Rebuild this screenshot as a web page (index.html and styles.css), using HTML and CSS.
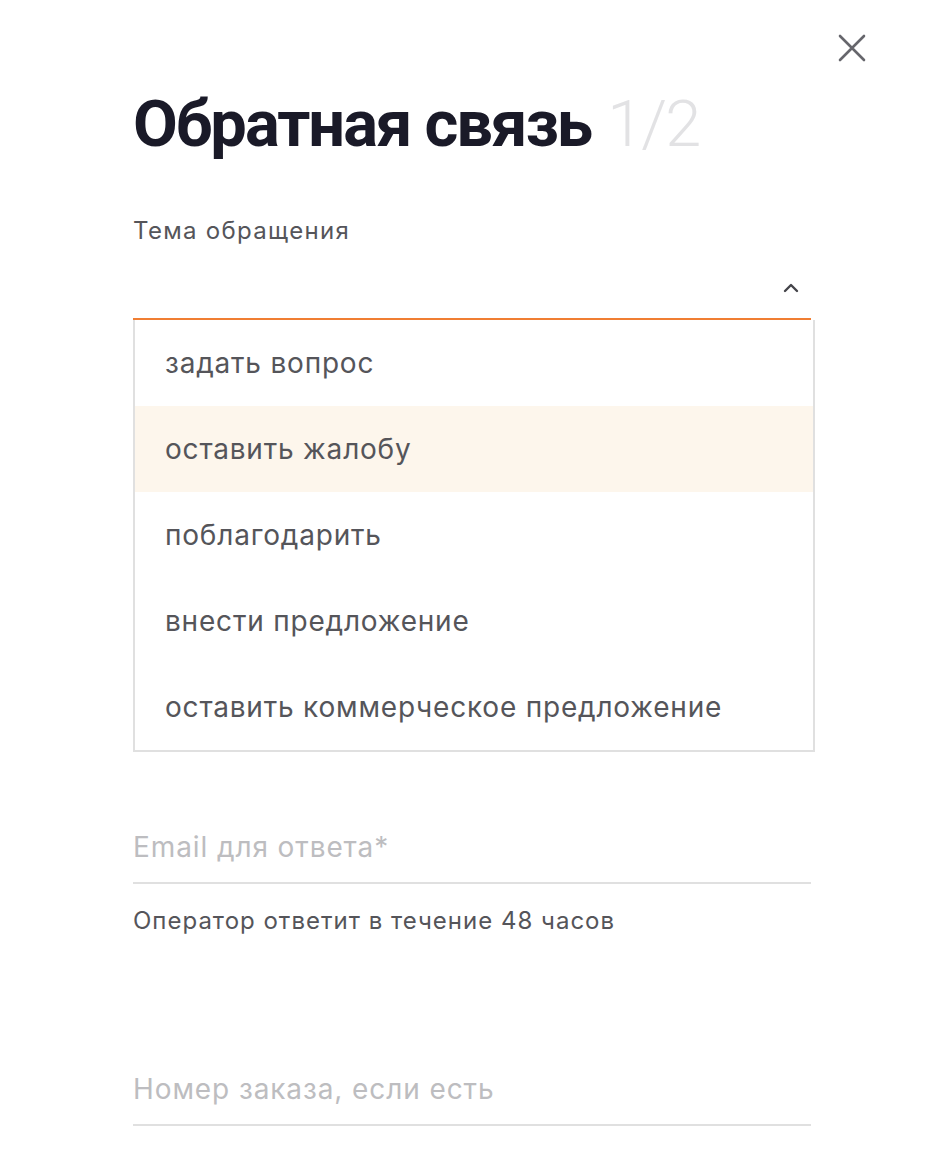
FILE: index.html
```html
<!DOCTYPE html>
<html lang="ru">
<head>
<meta charset="UTF-8">
<meta name="viewport" content="width=device-width, initial-scale=1.0">
<title>Обратная связь</title>
<link rel="stylesheet" href="styles.css">
</head>
<body>

<div class="modal">
    <button class="close" aria-label="Закрыть">
        <svg width="28" height="28" viewBox="0 0 28 28"><path d="M2 2 L26 26 M26 2 L2 26" stroke="#66666c" stroke-width="2.6" stroke-linecap="round"/></svg>
    </button>

    <div class="content">
        <h1 class="title">Обратная связь <span class="step">1/2</span></h1>

        <div class="field">
            <label class="label">Тема обращения</label>
            <div class="select">
                <svg class="chevron" width="16" height="10" viewBox="0 0 16 10"><path d="M2 8 L8 2 L14 8" fill="none" stroke="#44444a" stroke-width="2.4" stroke-linecap="round" stroke-linejoin="round"/></svg>
            </div>
            <ul class="options">
                <li>задать вопрос</li>
                <li class="active">оставить жалобу</li>
                <li>поблагодарить</li>
                <li>внести предложение</li>
                <li>оставить коммерческое предложение</li>
            </ul>
        </div>

        <div class="input input-email">
            <span class="placeholder">Email для ответа*</span>
        </div>
        <p class="hint">Оператор ответит в течение 48 часов</p>

        <div class="input input-order">
            <span class="placeholder">Номер заказа, если есть</span>
        </div>
    </div>
</div>

</body>
</html>
```

FILE: styles.css
```css
body {
    margin: 0;
    background: #fff;
    font-family: Inter, Roboto, "Noto Sans", sans-serif;
    color: #55555a;
}

.modal {
    position: relative;
    width: 942px;
    min-height: 1154px;
}

.close {
    position: absolute;
    top: 34px;
    right: 76px;
    padding: 0;
    border: none;
    background: none;
    cursor: pointer;
}

.content {
    margin-left: 133px;
    width: 678px;
    padding-top: 86px;
}

.title {
    margin: 0;
    font-family: Roboto, Inter, sans-serif;
    font-size: 65px;
    line-height: 76px;
    font-weight: 700;
    color: #1a1a28;
    letter-spacing: -2px;
}

.step {
    margin-left: 2px;
    font-weight: 300;
    color: #e2e2e4;
}

.field {
    margin-top: 54px;
}

.label {
    display: block;
    font-size: 24px;
    line-height: 30px;
    letter-spacing: 1.3px;
}

.select {
    display: flex;
    justify-content: flex-end;
    align-items: center;
    height: 60px;
    margin-top: 12px;
    padding-right: 12px;
    border-bottom: 2px solid #f07e33;
}

.options {
    list-style: none;
    margin: 0;
    padding: 0;
    width: 682px;
    border: 2px solid #e0e0e0;
    border-top: none;
    box-sizing: border-box;
}

.options li {
    height: 86px;
    display: flex;
    align-items: center;
    padding-left: 30px;
    font-size: 28px;
    letter-spacing: 0.8px;
}

.options li.active {
    background: #fdf6ec;
}

.input {
    display: flex;
    align-items: center;
    height: 70px;
    border-bottom: 2px solid #e0e0e0;
}

.input-email {
    margin-top: 60px;
}

.input-order {
    margin-top: 118px;
}

.placeholder {
    font-size: 28px;
    color: #bdbdc0;
    letter-spacing: 0.9px;
}

.hint {
    margin: 22px 0 0;
    font-size: 24px;
    line-height: 30px;
    letter-spacing: 1px;
}
```
